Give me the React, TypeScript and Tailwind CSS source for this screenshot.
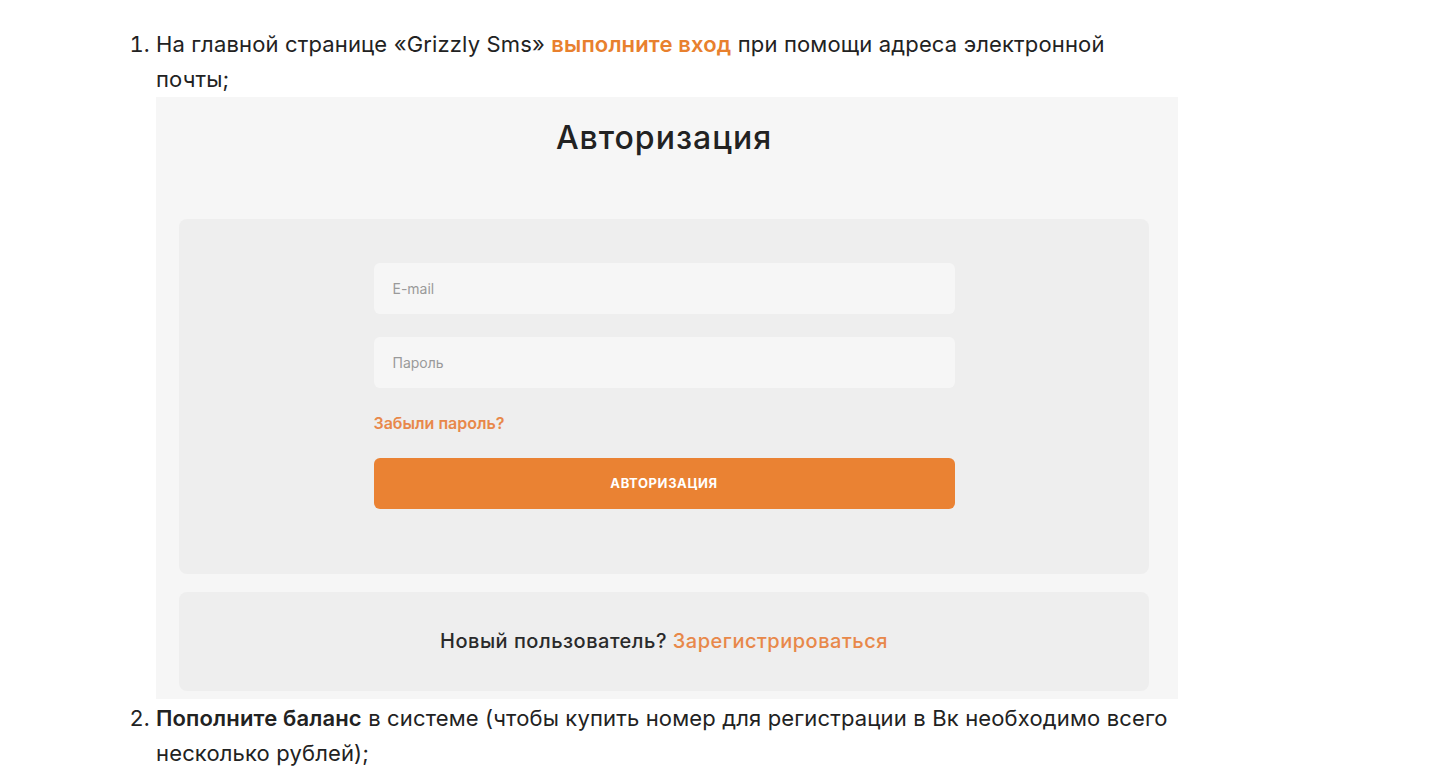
const font = "font-['Inter','Noto_Sans',sans-serif]";

function LoginShot() {
  return (
    <div className="w-[1022px] h-[602px] bg-[#f6f6f6] pl-[23px] pr-[29px] flex flex-col">
      <h2 className="h-[122px] pt-[18px] text-center text-[32px] leading-[46px] font-medium text-[#222] tracking-[1px]">
        Авторизация
      </h2>
      <div className="h-[355px] rounded-lg bg-[#eeeeee] pt-[44px] flex flex-col items-center">
        <div className="w-[581px] flex flex-col">
          <div className="h-[51px] rounded-md bg-[#f6f6f6] px-[19px] flex items-center text-[14px] text-[#9a9a9a]">
            E-mail
          </div>
          <div className="mt-[23px] h-[51px] rounded-md bg-[#f6f6f6] px-[19px] flex items-center text-[14px] text-[#9a9a9a]">
            Пароль
          </div>
          <div className="mt-[24px] h-[22px] flex items-center text-[16px] font-semibold text-[#e8884a]">
            Забыли пароль?
          </div>
          <button
            type="button"
            className="mt-[24px] h-[51px] rounded-md bg-[#ea8233] text-white text-[13px] font-bold uppercase tracking-[0.6px]"
          >
            Авторизация
          </button>
        </div>
      </div>
      <div className="mt-[18px] h-[99px] rounded-lg bg-[#eeeeee] flex items-center justify-center text-[20px] font-medium text-[#2a2a2a] tracking-[0.5px]">
        Новый пользователь?&nbsp;
        <span className="text-[#e8884a]">Зарегистрироваться</span>
      </div>
    </div>
  );
}

export default function App() {
  return (
    <div className={`min-h-screen bg-white text-[#222] ${font}`}>
      <ol className="list-decimal pl-[156px] pt-[27px] text-[22px] leading-[35px] tracking-[0.15px]">
        <li>
          На главной странице «Grizzly Sms»{" "}
          <a className="font-semibold text-[#e8802e]">выполните вход</a> при помощи
          адреса электронной
          <br />
          почты;
          <div className="mb-[2px] tracking-normal">
            <LoginShot />
          </div>
        </li>
        <li>
          <b className="font-semibold">Пополните баланс</b> в системе (чтобы купить
          номер для регистрации в Вк необходимо всего
          <br />
          несколько рублей);
        </li>
      </ol>
    </div>
  );
}
